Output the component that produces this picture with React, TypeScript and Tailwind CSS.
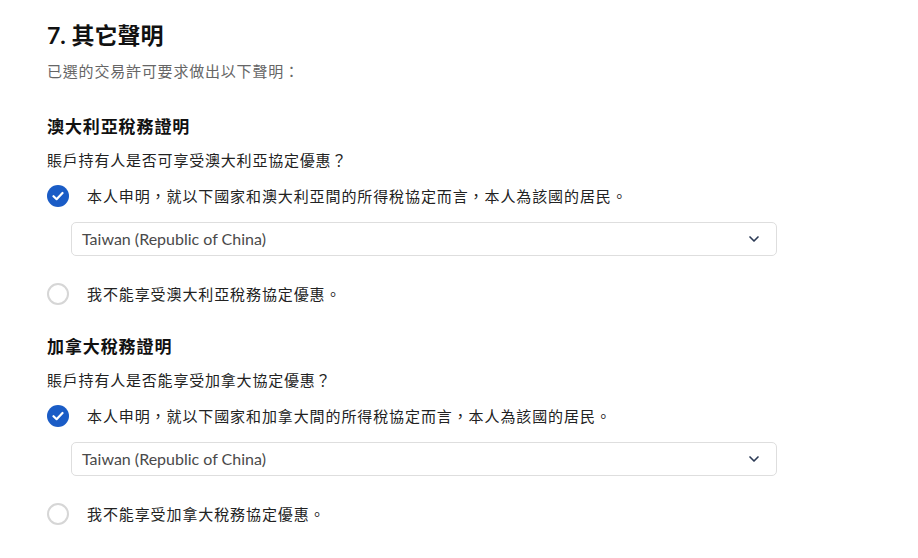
import { ChevronDown } from 'lucide-react'

const cjk = "font-['Lato','Noto_Sans_CJK_TC',sans-serif]"

function Checked() {
  return (
    <span className="flex h-[22px] w-[22px] shrink-0 items-center justify-center rounded-full bg-[#1a5cc6]">
      <svg width="12" height="10" viewBox="0 0 12 10" fill="none" aria-hidden="true">
        <path d="M1.5 5.2 4.6 8.2 10.5 2" stroke="white" strokeWidth="2.2" strokeLinecap="round" strokeLinejoin="round" />
      </svg>
    </span>
  )
}

function Unchecked() {
  return <span className="h-[22px] w-[22px] shrink-0 rounded-full border-2 border-[#d6d6d6] bg-white" />
}

function Select({ value }: { value: string }) {
  return (
    <div className="ml-6 flex h-[34px] w-[706px] items-center justify-between rounded-[5px] border border-[#dedede] bg-white pl-[10px] pr-[14px]">
      <span className="text-[16px] text-[#4a4a4a]">{value}</span>
      <ChevronDown className="h-4 w-4 text-[#2b3a55]" strokeWidth={2.5} />
    </div>
  )
}

function TaxSection({ title, question, yes, no }: { title: string; question: string; yes: string; no: string }) {
  return (
    <section>
      <h2 className="text-[17px] font-bold leading-[24px] tracking-[0.9px] text-[#111]">{title}</h2>
      <p className="mt-[10px] text-[15px] leading-[22px] tracking-[0.8px] text-[#222]">{question}</p>
      <div className="mt-[14px] flex items-center gap-[18px]">
        <Checked />
        <span className="text-[15px] tracking-[0.9px] text-[#222]">{yes}</span>
      </div>
      <div className="mt-[15px]">
        <Select value="Taiwan (Republic of China)" />
      </div>
      <div className="mt-[27px] flex items-center gap-[18px]">
        <Unchecked />
        <span className="text-[15px] tracking-[0.9px] text-[#222]">{no}</span>
      </div>
    </section>
  )
}

export default function App() {
  return (
    <div className={`h-[558px] w-[918px] bg-white pl-[47px] pt-[20px] ${cjk}`}>
      <h1 className="text-[23px] font-bold leading-[30px] text-[#111]">7. 其它聲明</h1>
      <p className="mt-[10px] text-[15px] tracking-[0.8px] text-[#666]">已選的交易許可要求做出以下聲明：</p>

      <div className="mt-[32px] flex flex-col gap-[29px]">
        <TaxSection
          title="澳大利亞稅務證明"
          question="賬戶持有人是否可享受澳大利亞協定優惠？"
          yes="本人申明，就以下國家和澳大利亞間的所得稅協定而言，本人為該國的居民。"
          no="我不能享受澳大利亞稅務協定優惠。"
        />
        <TaxSection
          title="加拿大稅務證明"
          question="賬戶持有人是否能享受加拿大協定優惠？"
          yes="本人申明，就以下國家和加拿大間的所得稅協定而言，本人為該國的居民。"
          no="我不能享受加拿大稅務協定優惠。"
        />
      </div>
    </div>
  )
}
